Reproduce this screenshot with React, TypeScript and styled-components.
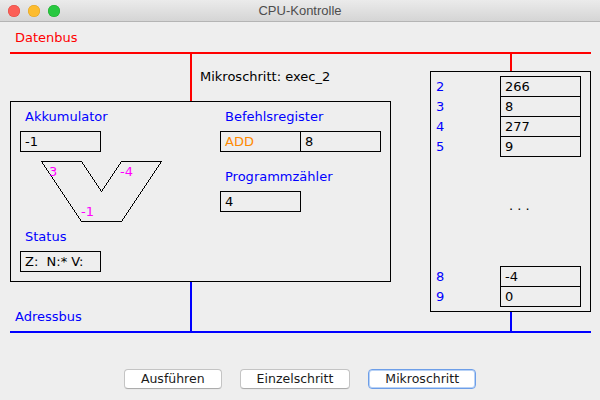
import React from "react";
import styled, { createGlobalStyle } from "styled-components";

const GlobalStyle = createGlobalStyle`
  html, body { margin: 0; padding: 0; background: #eeeeee; }
  * { box-sizing: border-box; }
`;

const Window = styled.div`
  width: 600px;
  height: 400px;
  background: #eeeeee;
  display: flex;
  flex-direction: column;
  overflow: hidden;
  font-family: "DejaVu Sans", "Liberation Sans", sans-serif;
  font-size: 13px;
  color: #000;
`;

const TitleBar = styled.div`
  height: 22px;
  flex: none;
  display: grid;
  grid-template-columns: 1fr auto 1fr;
  align-items: center;
  background: linear-gradient(#ebebeb, #d5d5d5);
  border-bottom: 1px solid #b4b4b4;
`;

const Lights = styled.div`
  display: flex;
  gap: 8px;
  padding-left: 8px;
`;

const Light = styled.span<{ $c: string; $b: string }>`
  width: 12px;
  height: 12px;
  border-radius: 50%;
  background: ${(p) => p.$c};
  box-shadow: inset 0 0 0 0.5px ${(p) => p.$b};
`;

const Title = styled.div`
  font-family: "Liberation Sans", Arial, sans-serif;
  font-size: 13px;
  line-height: 21px;
  color: #4d4d4d;
`;

const Content = styled.div`
  flex: 1;
  display: flex;
  flex-direction: column;
  padding: 0 9px 0 10px;
`;

const BusLabel = styled.div<{ $color: string }>`
  height: 30px;
  padding: 8px 0 0 5px;
  line-height: 15px;
  color: ${(p) => p.$color};
`;

const BusLine = styled.div<{ $color: string }>`
  height: 2px;
  width: 581px;
  background: ${(p) => p.$color};
`;

const Middle = styled.div`
  display: grid;
  grid-template-columns: 381px 161px;
  column-gap: 39px;
  height: 277px;
`;

const Column = styled.div`
  display: flex;
  flex-direction: column;
`;

const Connector = styled.div<{ $offset: number; $h: number }>`
  display: grid;
  grid-template-columns: ${(p) => p.$offset}px 2px auto;
  height: ${(p) => p.$h}px;
`;

const Wire = styled.div<{ $color: string }>`
  background: ${(p) => p.$color};
`;

const StepText = styled.div`
  padding: 15px 0 0 8px;
  line-height: 15px;
  white-space: nowrap;
`;

const WireLabel = styled.div<{ $color: string }>`
  padding: 27px 0 0 5px;
  line-height: 15px;
  color: ${(p) => p.$color};
`;

const CpuBox = styled.div`
  width: 381px;
  height: 181px;
  border: 1px solid #000;
  display: grid;
  grid-template-columns: 200px 1fr;
  padding-left: 9px;
`;

const Stack = styled.div`
  display: flex;
  flex-direction: column;
  align-items: flex-start;
`;

const RegLabel = styled.div<{ $mt: number }>`
  margin-top: ${(p) => p.$mt}px;
  padding-left: 5px;
  line-height: 15px;
  color: #0000ff;
  white-space: nowrap;
`;

const Field = styled.div<{ $w?: number; $color?: string }>`
  width: ${(p) => p.$w ?? 81}px;
  height: 21px;
  border: 1px solid #000;
  padding-left: 4px;
  line-height: 19px;
  white-space: pre;
  color: ${(p) => p.$color ?? "#000"};
`;

const FieldPair = styled.div`
  margin-top: 7px;
  display: flex;
  & > * + * {
    margin-left: -1px;
  }
`;

const FieldGap = styled.div`
  margin-top: 7px;
`;

const AluSvg = styled.svg`
  display: block;
  margin: 9px 0 0 21px;
  overflow: visible;
  font-family: "DejaVu Sans", sans-serif;
  font-size: 13px;
`;

const MemBox = styled.div`
  width: 161px;
  height: 241px;
  border: 1px solid #000;
  padding: 4px 0 0 5px;
  display: flex;
  flex-direction: column;
`;

const MemGroup = styled.div`
  display: flex;
  flex-direction: column;
  & > * + * {
    margin-top: -1px;
  }
`;

const MemRow = styled.div`
  display: flex;
  height: 21px;
`;

const MemAddr = styled.div`
  width: 64px;
  line-height: 19px;
  padding-top: 1px;
  color: #0000ff;
`;

const Ellipsis = styled.div`
  height: 109px;
  padding: 41px 0 0 73px;
  line-height: 15px;
`;

const ButtonRow = styled.div`
  margin-top: 36px;
  display: flex;
  justify-content: center;
  gap: 18px;
  padding-right: 1px;
`;

const Button = styled.button<{ $default?: boolean }>`
  height: 20px;
  padding: 0 16px;
  font-family: "DejaVu Sans", sans-serif;
  font-size: 12.5px;
  line-height: 18px;
  color: #1a1a1a;
  background: #ffffff;
  border: 1px solid ${(p) => (p.$default ? "#6d9ee8" : "#c4c4c4")};
  border-bottom-color: ${(p) => (p.$default ? "#6d9ee8" : "#acacac")};
  border-radius: 4px;
  box-shadow: ${(p) =>
    p.$default ? "inset 0 0 0 1px #b8d2f6" : "0 0.5px 0 rgba(0,0,0,0.05)"};
  cursor: default;
`;

const memTop = [
  ["2", "266"],
  ["3", "8"],
  ["4", "277"],
  ["5", "9"],
];
const memBottom = [
  ["8", "-4"],
  ["9", "0"],
];

export default function App() {
  return (
    <>
      <GlobalStyle />
      <Window>
        <TitleBar>
          <Lights>
            <Light $c="#fc5f57" $b="#de4a42" />
            <Light $c="#fdbc2e" $b="#dea123" />
            <Light $c="#28c840" $b="#1daa2c" />
          </Lights>
          <Title>CPU-Kontrolle</Title>
          <div />
        </TitleBar>
        <Content>
          <BusLabel $color="#ff0000">Datenbus</BusLabel>
          <BusLine $color="#ff0000" />
          <Middle>
            <Column>
              <Connector $offset={180} $h={47}>
                <div />
                <Wire $color="#ff0000" />
                <StepText>Mikroschritt: exec_2</StepText>
              </Connector>
              <CpuBox>
                <Stack>
                  <RegLabel $mt={7}>Akkumulator</RegLabel>
                  <FieldGap>
                    <Field>-1</Field>
                  </FieldGap>
                  <AluSvg width="121" height="61" viewBox="0 0 121 61">
                    <polygon
                      points="0.5,0.5 40.5,0.5 60.5,30.5 80.5,0.5 120.5,0.5 80.5,60.5 40.5,60.5"
                      fill="none"
                      stroke="#000"
                      strokeWidth="1"
                      shapeRendering="crispEdges"
                    />
                    <text x="8" y="15" fill="#ff00ff">3</text>
                    <text x="79" y="15" fill="#ff00ff">-4</text>
                    <text x="40" y="55" fill="#ff00ff">-1</text>
                  </AluSvg>
                  <RegLabel $mt={7}>Status</RegLabel>
                  <FieldGap>
                    <Field>{"Z:  N:* V:"}</Field>
                  </FieldGap>
                </Stack>
                <Stack>
                  <RegLabel $mt={7}>Befehlsregister</RegLabel>
                  <FieldPair>
                    <Field $color="#ff8a00">ADD</Field>
                    <Field>8</Field>
                  </FieldPair>
                  <RegLabel $mt={17}>Programmzähler</RegLabel>
                  <FieldGap>
                    <Field>4</Field>
                  </FieldGap>
                </Stack>
              </CpuBox>
              <Connector $offset={180} $h={49}>
                <WireLabel $color="#0000ff">Adressbus</WireLabel>
                <Wire $color="#0000ff" />
              </Connector>
            </Column>
            <Column>
              <Connector $offset={80} $h={17}>
                <div />
                <Wire $color="#ff0000" />
              </Connector>
              <MemBox>
                <MemGroup>
                  {memTop.map(([a, v]) => (
                    <MemRow key={a}>
                      <MemAddr>{a}</MemAddr>
                      <Field>{v}</Field>
                    </MemRow>
                  ))}
                </MemGroup>
                <Ellipsis>. . .</Ellipsis>
                <MemGroup>
                  {memBottom.map(([a, v]) => (
                    <MemRow key={a}>
                      <MemAddr>{a}</MemAddr>
                      <Field>{v}</Field>
                    </MemRow>
                  ))}
                </MemGroup>
              </MemBox>
              <Connector $offset={80} $h={19}>
                <div />
                <Wire $color="#0000ff" />
              </Connector>
            </Column>
          </Middle>
          <BusLine $color="#0000ff" />
          <ButtonRow>
            <Button>Ausführen</Button>
            <Button>Einzelschritt</Button>
            <Button $default>Mikroschritt</Button>
          </ButtonRow>
        </Content>
      </Window>
    </>
  );
}
